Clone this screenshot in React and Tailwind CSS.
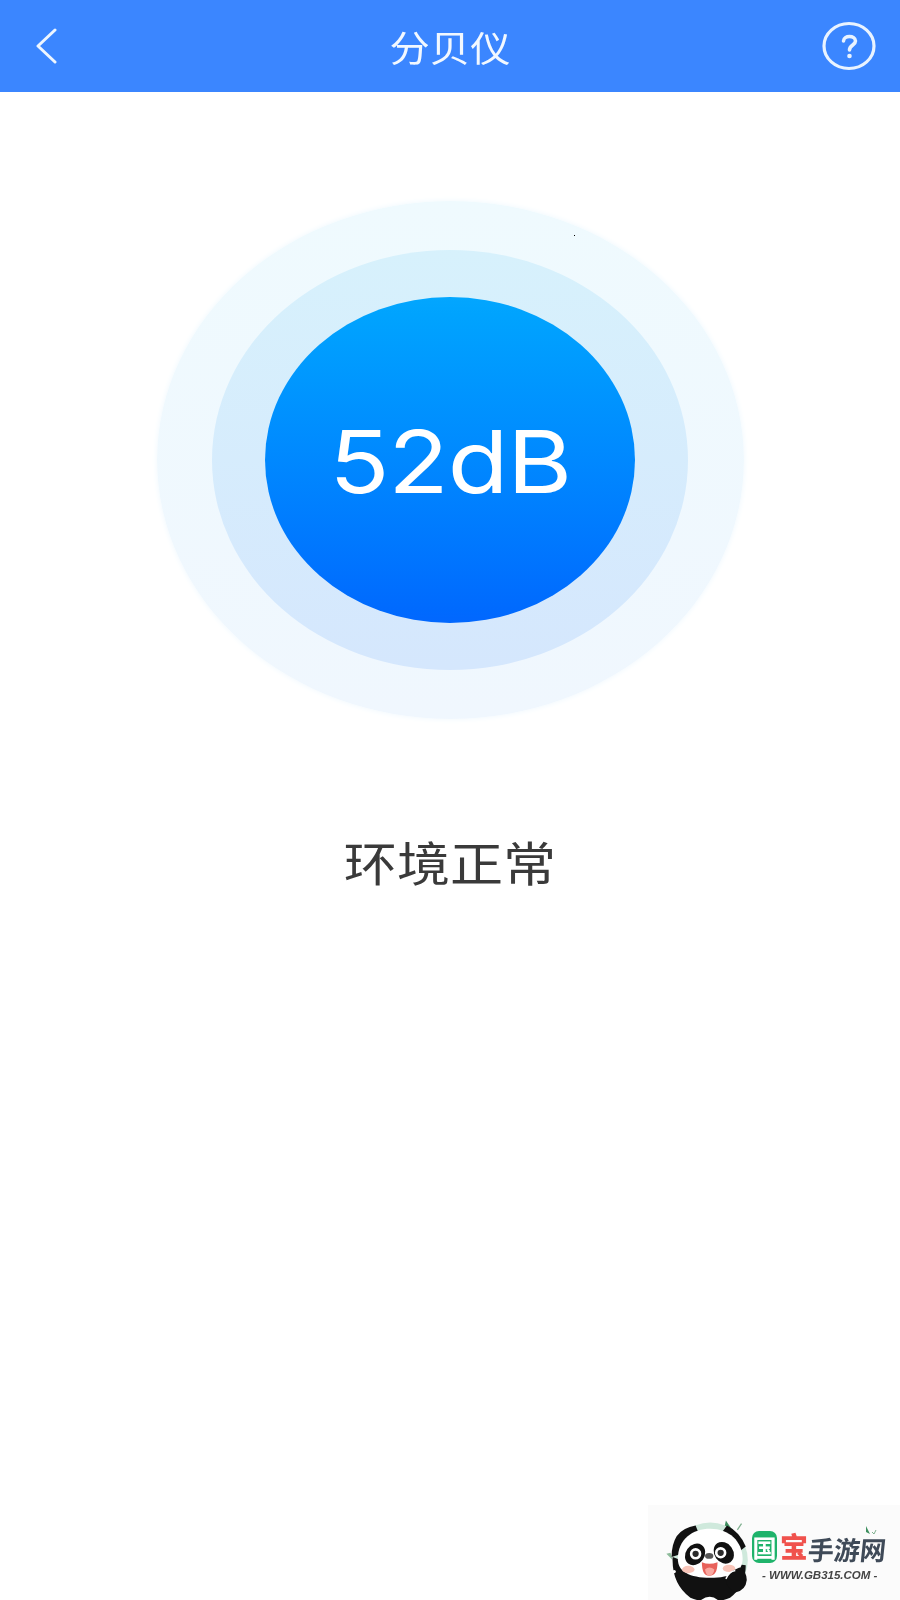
import React from "react";

function Panda() {
  return (
    <svg width="94" height="94" viewBox="0 0 90 90" className="shrink-0">
      <circle cx="50" cy="47" r="36" fill="#cfe9dc" />
      <path d="M65 9 L71 18 L64 14 Z" fill="#3d8f5e" />
      <path d="M80 12 L76 18" stroke="#7fb08f" strokeWidth="1.2" />
      <path d="M8 41 L14 47 L12 40 Z" fill="#8dbb9a" />
      <path d="M18 24 Q24 16 36 14 L40 24 L26 40 L13 44 Q13 32 18 24 Z" fill="#111" />
      <path d="M66 14 Q78 20 84 34 L74 42 L60 22 Z" fill="#111" />
      <path d="M14 44 Q13 70 31 83 Q50 91 69 83 Q84 72 84 52 L70 50 L30 50 Z" fill="#111" />
      <path d="M19 46 C19 27 33 17 50 17 C68 17 81 29 81 46 C81 58 70 64 50 64 C30 64 19 58 19 46 Z" fill="#fff" />
      <circle cx="15.5" cy="58" r="1.6" fill="#fff" />
      <path d="M38 88 Q50 76 60 88 Z" fill="#fff" />
      <ellipse cx="35.5" cy="41.5" rx="9" ry="11" transform="rotate(35 35.5 41.5)" fill="#111" />
      <ellipse cx="63" cy="40" rx="9" ry="11" transform="rotate(-35 63 40)" fill="#111" />
      <circle cx="36" cy="41" r="5.5" fill="#fff" />
      <circle cx="60" cy="40" r="5.5" fill="#fff" />
      <circle cx="36" cy="41" r="3" fill="#2a2a2a" />
      <circle cx="60" cy="40" r="3" fill="#2a2a2a" />
      <ellipse cx="49" cy="43" rx="4" ry="2.8" fill="#555" />
      <path d="M42 49 Q49 52 57 49 Q57 62 49 62 Q42 62 42 49 Z" fill="#e8625b" />
      <path d="M45 56 Q49 52 54 56 Q53 62 49 62 Q46 62 45 56 Z" fill="#f9a8a0" />
      <ellipse cx="29" cy="56" rx="6" ry="3.5" fill="#f8c4b8" />
      <ellipse cx="68" cy="55" rx="6" ry="3.5" fill="#f8c4b8" />
      <path d="M65 66 Q68 58 74 56 L78 54 Q85 58 85 66 Q84 76 74 78 Q66 74 65 66 Z" fill="#111" />
      <path d="M65 65 Q68 58 74 57" stroke="#fff" strokeWidth="1.4" fill="none" />
    </svg>
  );
}

export default function App() {
  return (
    <div className="relative w-[900px] h-[1600px] bg-white overflow-hidden font-['Liberation_Sans','Noto_Sans_CJK_SC',sans-serif]">
      <header className="h-[92px] bg-[#3b86ff] grid grid-cols-[64px_1fr_64px] items-center px-[24px]">
        <svg width="24" height="36" viewBox="0 0 24 36" fill="none" stroke="#eef6ff" strokeWidth="3" strokeLinecap="round" strokeLinejoin="round" className="ml-[10px]">
          <path d="M21 2 L4 18 L21 34" />
        </svg>
        <h1 className="text-center text-[36px] scale-x-[1.12] leading-none text-[#f2f8ff] font-['Noto_Sans_CJK_SC',sans-serif] font-normal">分贝仪</h1>
        <svg width="56" height="50" viewBox="0 0 56 50" fill="none" className="justify-self-end blur-[0.4px]">
          <ellipse cx="29" cy="25" rx="25" ry="22.5" stroke="#e9f3ff" strokeWidth="3.2" />
          <path d="M23.5 20 C23.5 14 35.5 14 35.5 20 C35.5 24 29.5 24 29.5 29" stroke="#e9f3ff" strokeWidth="3.6" strokeLinecap="round" />
          <circle cx="29.5" cy="35" r="2.3" fill="#e9f3ff" />
        </svg>
      </header>

      <main className="flex flex-col items-center pt-[109px]">
        <div className="relative w-[587px] h-[518px] rounded-[50%] bg-linear-to-b from-[#effafe] to-[#f0f7fe] shadow-[0_0_5px_1px_#f3fafe] flex items-center justify-center">
          <div className="w-[476px] h-[420px] rounded-[50%] bg-linear-to-b from-[#d7f1fc] to-[#d5e7fd] flex items-center justify-center">
            <div className="w-[370px] h-[326px] rounded-[50%] bg-linear-to-b from-[#03a6fe] to-[#0267fe] flex items-center justify-center">
              <span className="inline-block pt-[3px] scale-x-[1.14] text-white text-[87px] leading-none font-['Inter',sans-serif] font-normal tracking-[-1px]">52dB</span>
            </div>
          </div>
          <div className="absolute left-[417px] top-[34px] w-px h-px bg-black" />
        </div>
        <p className="mt-[118px] scale-x-[1.13] text-[47px] leading-none text-[#3a3a3a] font-normal font-['Noto_Sans_CJK_SC',sans-serif]">环境正常</p>
      </main>

      <div className="absolute right-0 bottom-0 w-[252px] h-[95px] bg-[#fbfbfb] flex items-start pl-[10px] pt-[6px] overflow-hidden">
        <Panda />
        <div className="flex flex-col pt-[18px] font-['Noto_Sans_CJK_SC',sans-serif] blur-[0.3px]">
          <div className="flex items-end">
            <span className="w-[25px] h-[32px] rounded-[7px] bg-[#1fb36b] text-white text-[24px] font-bold leading-none flex items-center justify-center">国</span>
            <span className="ml-[3px] text-[#f0524d] text-[28px] h-[34px] font-black leading-[34px]">宝</span>
            <span className="inline-block -skew-x-6 text-[#3f4a58] text-[26px] h-[26px] font-bold leading-[24px] whitespace-nowrap">手游网</span>
          </div>
          <span className="mt-[7px] ml-[10px] text-[11.5px] leading-none font-bold italic text-[#444] whitespace-nowrap font-['Liberation_Sans',sans-serif]">- WWW.GB315.COM -</span>
        </div>
        <svg width="16" height="12" viewBox="0 0 16 12" className="absolute left-[216px] top-[21px]">
          <path d="M2 0 L6 8 L2 6 Z" fill="#3d8f5e" />
          <path d="M12 4 L10 8 M8 6 L10 8" stroke="#7fb08f" strokeWidth="1" fill="none" />
        </svg>
      </div>
    </div>
  );
}
